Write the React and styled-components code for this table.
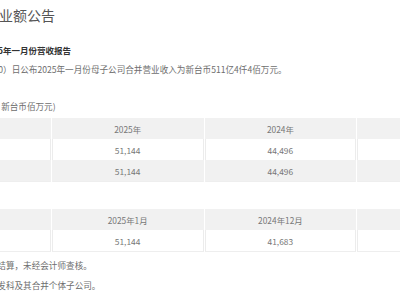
import React from "react";
import styled, { createGlobalStyle } from "styled-components";

const Global = createGlobalStyle`
  html, body { margin: 0; padding: 0; background: #fff; overflow: hidden; }
  body { font-family: "Noto Sans CJK SC", "Noto Sans", sans-serif; }
`;

const Page = styled.div`
  width: 612px;
  margin-left: -102px;
  color: #666;
`;

const Title = styled.h1`
  margin: 0;
  font-size: 14px;
  line-height: 30px;
  font-weight: 400;
  color: #555;
  white-space: nowrap;
`;

const Subtitle = styled.h2`
  margin: 13px 0 0;
  font-size: 8.5px;
  line-height: 14px;
  font-weight: 700;
  color: #333;
  white-space: nowrap;
`;

const Para = styled.p`
  margin: ${(p) => p.$top || 0}px 0 0;
  font-size: 8.6px;
  line-height: 14px;
  color: #6e6e6e;
  white-space: nowrap;
`;

const Table = styled.table`
  width: 612px;
  margin-top: ${(p) => p.$top}px;
  border-collapse: separate;
  border-spacing: 1px 0;
  table-layout: fixed;
  font-size: 8.4px;
  color: #777;
`;

const Row = styled.tr`
  background: ${(p) => (p.$shade ? "#f1f1f1" : "#fff")};
`;

const Cell = styled.td`
  height: 21px;
  padding: 0;
  text-align: center;
  border-left: 1px solid ${(p) => (p.$shade ? "#f1f1f1" : "#ececec")};
  border-right: 1px solid ${(p) => (p.$shade ? "#f1f1f1" : "#ececec")};
  border-bottom: ${(p) => (p.$last ? "1px solid #eee" : "none")};
  white-space: nowrap;
`;

function DataTable({ top, head, rows }) {
  return (
    <Table $top={top}>
      <tbody>
        <Row $shade>
          {head.map((h, i) => (
            <Cell $shade key={i}>{h}</Cell>
          ))}
        </Row>
        {rows.map((r, ri) => {
          const shade = ri % 2 === 1;
          return (
            <Row $shade={shade} key={ri}>
              {r.map((c, ci) => (
                <Cell $shade={shade} $last={ri === rows.length - 1} key={ci}>
                  {c}
                </Cell>
              ))}
            </Row>
          );
        })}
      </tbody>
    </Table>
  );
}

export default function App() {
  return (
    <>
      <Global />
      <Page>
        <Title>2025年一月份营业额公告</Title>
        <Subtitle>联发科技股份有限公司2025年一月份营收报告</Subtitle>
        <Para $top={5}>联发科技于今（2025/02/10）日公布2025年一月份母子公司合并营业收入为新台币511亿4仟4佰万元。</Para>
        <Para $top={23}>合并营业收入净额（单位：新台币佰万元)</Para>
        <DataTable
          top={5}
          head={["", "2025年", "2024年", "增减%"]}
          rows={[
            ["一月", "51,144", "44,496", "14.94%"],
            ["累计", "51,144", "44,496", "14.94%"],
          ]}
        />
        <DataTable
          top={27}
          head={["", "2025年1月", "2024年12月", "增减%"]}
          rows={[["营收", "51,144", "41,683", "22.70%"]]}
        />
        <Para $top={6}>注1：营收数字为公司自行结算，未经会计师查核。</Para>
        <Para $top={6}>注2：上述合并营收包含联发科及其合并个体子公司。</Para>
      </Page>
    </>
  );
}
